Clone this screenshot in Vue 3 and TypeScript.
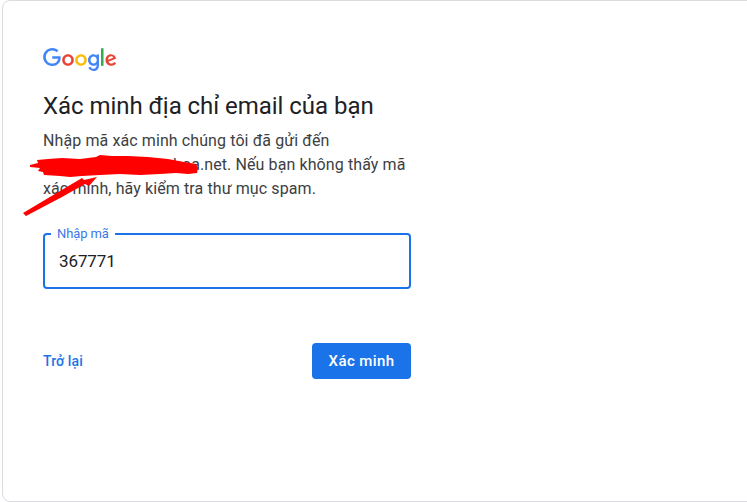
<script setup lang="ts">
const code = '367771'
</script>

<template>
  <div class="page">
    <main class="card">
      <svg class="logo" viewBox="0 0 75 24" width="75" height="24" aria-label="Google">
        <path fill="#4285F4" d="M9.24 8.19v2.46h5.88c-.18 1.38-.64 2.39-1.34 3.1-.86.86-2.2 1.8-4.54 1.8-3.62 0-6.45-2.92-6.45-6.54s2.83-6.54 6.45-6.54c1.95 0 3.38.77 4.43 1.76L15.4 2.5C13.94 1.08 11.98 0 9.24 0 4.28 0 .11 4.04.11 9s4.17 9 9.13 9c2.68 0 4.7-.88 6.28-2.52 1.62-1.62 2.13-3.91 2.13-5.75 0-.57-.04-1.1-.13-1.54H9.24z"/>
        <path fill="#EA4335" d="M25 6.19c-3.21 0-5.83 2.44-5.83 5.81 0 3.34 2.62 5.81 5.83 5.81s5.83-2.46 5.83-5.81c0-3.37-2.62-5.81-5.83-5.81zm0 9.33c-1.76 0-3.28-1.45-3.28-3.52 0-2.09 1.52-3.52 3.28-3.52s3.28 1.43 3.28 3.52c0 2.07-1.52 3.52-3.28 3.52z"/>
        <path fill="#4285F4" d="M53.58 7.49h-.09c-.57-.68-1.67-1.3-3.06-1.3C47.53 6.19 45 8.72 45 12c0 3.26 2.53 5.81 5.43 5.81 1.39 0 2.49-.62 3.06-1.32h.09v.81c0 2.22-1.19 3.41-3.1 3.41-1.56 0-2.53-1.12-2.93-2.07l-2.22.92c.64 1.54 2.33 3.43 5.15 3.43 2.99 0 5.52-1.76 5.52-6.05V6.49h-2.42v1zm-2.93 8.03c-1.76 0-3.1-1.5-3.1-3.52 0-2.05 1.34-3.52 3.1-3.52 1.74 0 3.1 1.5 3.1 3.54 0 2.02-1.36 3.5-3.1 3.5z"/>
        <path fill="#FBBC05" d="M38 6.19c-3.21 0-5.83 2.44-5.83 5.81 0 3.34 2.62 5.81 5.83 5.81s5.83-2.46 5.83-5.81c0-3.37-2.62-5.81-5.83-5.81zm0 9.33c-1.76 0-3.28-1.45-3.28-3.52 0-2.09 1.52-3.52 3.28-3.52s3.28 1.43 3.28 3.52c0 2.07-1.52 3.52-3.28 3.52z"/>
        <path fill="#34A853" d="M58 .24h2.51v17.57H58z"/>
        <path fill="#EA4335" d="M68.26 15.52c-1.3 0-2.22-.59-2.82-1.76l7.77-3.21-.26-.66c-.48-1.3-1.96-3.7-4.97-3.7-2.99 0-5.48 2.35-5.48 5.81 0 3.26 2.46 5.81 5.76 5.81 2.66 0 4.2-1.63 4.84-2.57l-1.98-1.32c-.66.96-1.56 1.6-2.86 1.6zm-.18-7.15c1.03 0 1.91.53 2.2 1.28l-5.25 2.17c0-2.44 1.73-3.45 3.05-3.45z"/>
      </svg>

      <h1 class="title">Xác minh địa chỉ email của bạn</h1>
      <p class="desc">
        Nhập mã xác minh chúng tôi đã gửi đến<br />
        xxxxxxxxxx@rrxxxhoa.net. Nếu bạn không thấy mã<br />
        xác minh, hãy kiểm tra thư mục spam.
      </p>

      <div class="field">
        <span class="label">Nhập mã</span>
        <span class="value">{{ code }}</span>
      </div>

      <div class="actions">
        <a class="back">Trở lại</a>
        <button class="verify" type="button">Xác minh</button>
      </div>
    </main>

    <svg class="scribble" width="747" height="502" viewBox="0 0 747 502" aria-hidden="true">
      <path fill="#fe0000" d="M30 165 L38 163 L37 160 L48 159 L62 158 L80 159 L96 157 L100 155 L112 156 L128 156 L148 157 L168 159 L184 162 L196 164 L198 168 L197 173 L188 174 L176 173 L160 174 L140 175 L120 174 L100 175 L82 176 L70 177 L60 176 L44 175 L43 172 L38 171 L40 168 L30 167 Z"/>
      <path fill="#fe0000" d="M23 213 L60 191 L82 178 L84 180 L97 177 L89 186 L85 184 L62 197 L26 216 Z"/>
    </svg>
  </div>
</template>

<style>
html, body { margin: 0; background: #fff; overflow: hidden; }
</style>

<style scoped>
.page {
  position: relative;
  width: 747px;
  height: 502px;
  overflow: hidden;
  background: #fff;
  font-family: Roboto, "Liberation Sans", sans-serif;
}
.card {
  box-sizing: border-box;
  width: 900px;
  height: 502px;
  margin-left: 2px;
  padding: 47px 0 0 40px;
  border: 1px solid #dadce0;
  border-radius: 8px;
  background: #fff;
}
.logo { display: block; }
.title {
  margin: 18px 0 0;
  font-size: 24px;
  line-height: 32px;
  font-weight: 400;
  letter-spacing: -0.04px;
  color: #202124;
}
.desc {
  margin: 7px 0 0;
  width: 400px;
  font-size: 16px;
  line-height: 24px;
  letter-spacing: 0.1px;
  color: #3c4043;
  white-space: nowrap;
}
.field {
  position: relative;
  box-sizing: border-box;
  display: flex;
  align-items: center;
  width: 368px;
  height: 56px;
  margin-top: 32px;
  padding: 0 14px;
  border: 2px solid #1a73e8;
  border-radius: 4px;
}
.label {
  position: absolute;
  top: -9px;
  left: 6px;
  padding: 0 6px;
  background: #fff;
  font-size: 13px;
  line-height: 16px;
  letter-spacing: -0.1px;
  color: #3b78e7;
}
.value {
  font-size: 17px;
  letter-spacing: -0.1px;
  color: #202124;
}
.actions {
  display: flex;
  align-items: center;
  justify-content: space-between;
  width: 368px;
  margin-top: 54px;
}
.back {
  font-size: 14px;
  font-weight: 500;
  letter-spacing: 0.1px;
  color: #1a73e8;
}
.verify {
  width: 99px;
  height: 36px;
  border: 0;
  border-radius: 4px;
  background: #1a73e8;
  color: #fff;
  font-family: inherit;
  font-size: 15px;
  font-weight: 500;
  letter-spacing: 0.4px;
}
.scribble {
  position: absolute;
  inset: 0;
  pointer-events: none;
}
</style>
